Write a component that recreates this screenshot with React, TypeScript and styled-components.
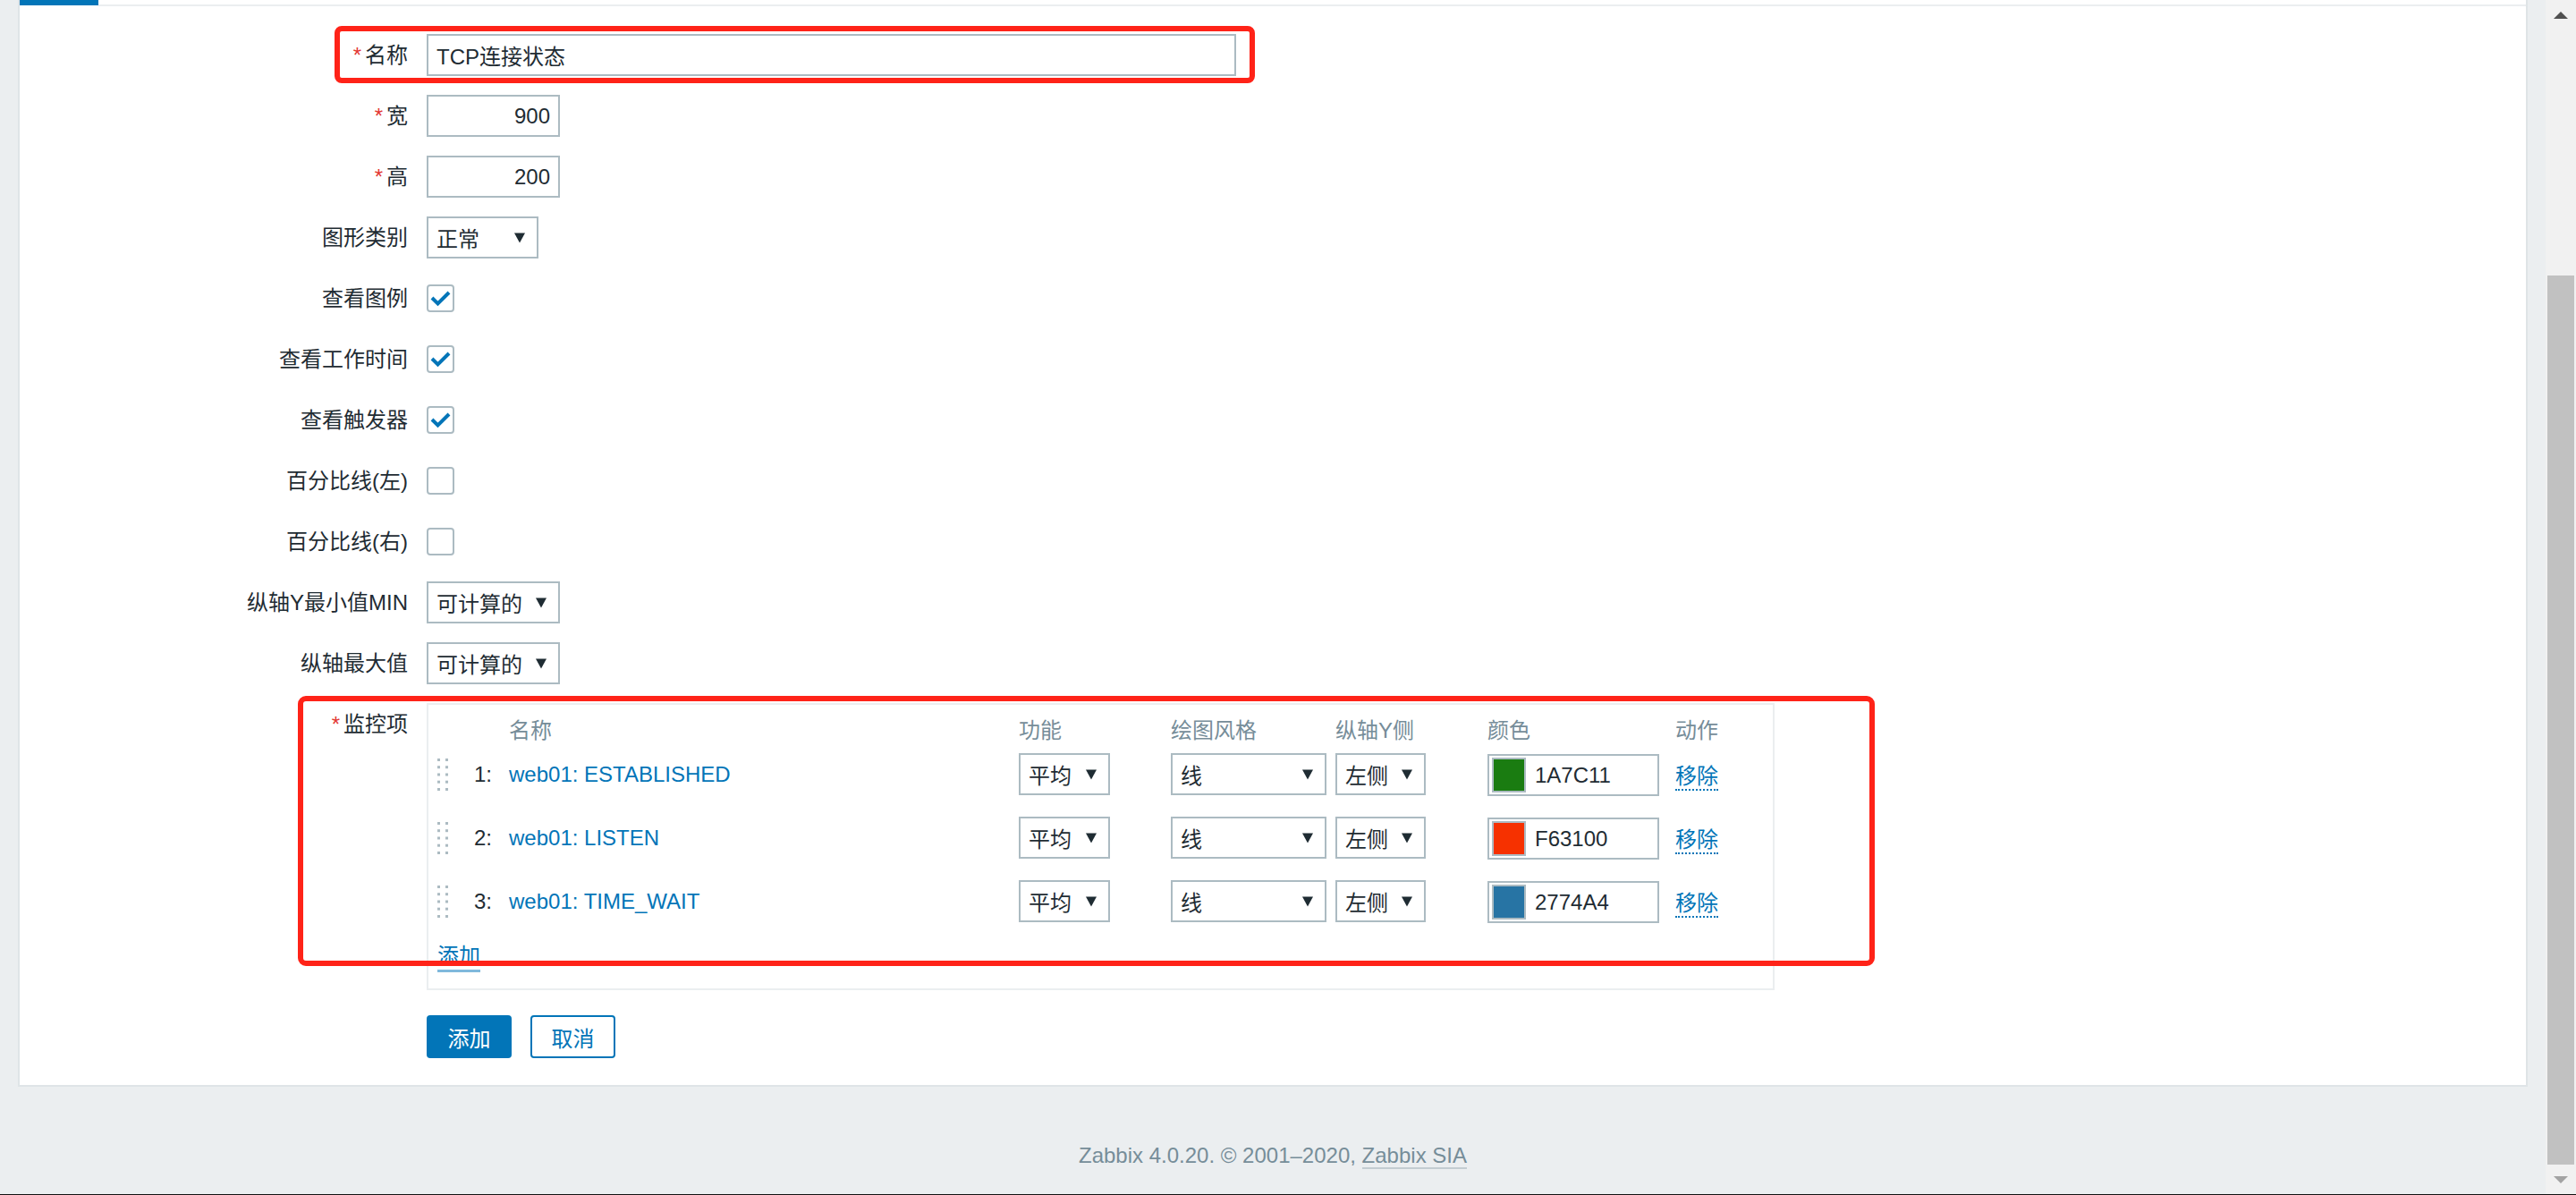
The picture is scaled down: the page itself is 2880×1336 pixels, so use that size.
import React from 'react';
import styled, { createGlobalStyle } from 'styled-components';

const FONT = `"Liberation Sans", Arial, "Noto Sans CJK SC", sans-serif`;

const GlobalStyle = createGlobalStyle`
  html, body { margin: 0; padding: 0; }
  body {
    font-family: ${FONT};
    font-size: 24px;
    color: #1f2c33;
    background: #ebeef0;
  }
  #root { width: 2880px; height: 1336px; overflow: hidden; }
  * { box-sizing: border-box; }
`;

const Page = styled.div`
  display: flex;
  flex-direction: column;
  width: 2880px;
  height: 1336px;
  background: #ebeef0;
`;

const Viewport = styled.div`
  display: flex;
  flex: 1;
  min-height: 0;
`;

const Main = styled.div`
  flex: 1;
  display: flex;
  flex-direction: column;
  min-width: 0;
`;

const Panel = styled.div`
  margin: 0 20px;
  background: #ffffff;
  border: 2px solid #dfe4e7;
  border-top: none;
  padding-bottom: 30px;
`;

const TabStrip = styled.div`
  display: flex;
  align-items: flex-start;
  height: 7px;
`;

const ActiveTab = styled.div`
  width: 88px;
  height: 6px;
  background: #0275b8;
`;

const TabRest = styled.div`
  flex: 1;
  height: 7px;
  border-bottom: 2px solid #ebeef0;
`;

const Form = styled.div`
  display: flex;
  flex-direction: column;
  gap: 21px;
  padding-top: 31px;
`;

const FormRow = styled.div<{ $top?: boolean }>`
  position: relative;
  display: grid;
  grid-template-columns: 434px 1fr;
  column-gap: 21px;
  align-items: ${(p) => (p.$top ? 'start' : 'center')};
  min-height: 47px;
`;

const Label = styled.div`
  text-align: right;
  line-height: 47px;
  white-space: nowrap;
  color: #1f2c33;
`;

const Star = styled.span`
  color: #e33734;
  margin-right: 4px;
`;

const TextInput = styled.input<{ $w: number; $right?: boolean }>`
  width: ${(p) => p.$w}px;
  height: 47px;
  border: 2px solid #acbbc2;
  padding: 0 9px;
  font: inherit;
  font-size: 24px;
  color: #1f2c33;
  background: #fff;
  outline: none;
  text-align: ${(p) => (p.$right ? 'right' : 'left')};
`;

const CheckBox = styled.div`
  width: 31px;
  height: 31px;
  border: 2px solid #acbbc2;
  border-radius: 4px;
  background: #fff;
  display: flex;
  align-items: center;
  justify-content: center;
`;

const SelectBox = styled.div<{ $w: number }>`
  width: ${(p) => p.$w}px;
  height: 47px;
  border: 2px solid #acbbc2;
  background: #fff;
  display: flex;
  align-items: center;
  justify-content: space-between;
  padding: 0 13px 0 9px;
  color: #1f2c33;
  white-space: nowrap;
`;

const ItemsBox = styled.div`
  width: 1507px;
  border: 2px solid #ebeef0;
  padding: 6px 10px 18px 10px;
  display: flex;
  flex-direction: column;
`;

const GridCols = `41px 39px 570px 170px 184px 170px 210px 1fr`;

const HeaderRow = styled.div`
  display: grid;
  grid-template-columns: ${GridCols};
  height: 40px;
  align-items: center;
  color: #768d99;
`;

const ItemsList = styled.div`
  display: flex;
  flex-direction: column;
  gap: 24px;
  margin-top: 7px;
`;

const ItemRow = styled.div`
  display: grid;
  grid-template-columns: ${GridCols};
  height: 47px;
  align-items: center;
`;

const RowNum = styled.div`
  color: #1f2c33;
`;

const ItemLink = styled.span`
  color: #0275b8;
  white-space: nowrap;
`;

const ColorInput = styled.div`
  align-self: start;
  margin-top: 2px;
  width: 192px;
  height: 47px;
  border: 2px solid #acbbc2;
  display: flex;
  align-items: center;
  gap: 10px;
  padding-left: 3px;
  color: #1f2c33;
`;

const Swatch = styled.div<{ $c: string }>`
  width: 38px;
  height: 39px;
  border: 2px solid #acbbc2;
  background: ${(p) => p.$c};
`;

const RemoveLink = styled.span`
  justify-self: start;
  margin-top: 6px;
  color: #0275b8;
  line-height: 28px;
  border-bottom: 2px dotted #0275b8;
`;

const AddLink = styled.span`
  align-self: flex-start;
  margin-top: 24px;
  color: #0275b8;
  line-height: 30px;
  border-bottom: 3px solid #80b9dc;
`;

const ButtonRow = styled.div`
  display: flex;
  gap: 21px;
  margin-top: 7px;
  padding-left: 455px;
`;

const PrimaryButton = styled.button`
  width: 95px;
  height: 48px;
  border: none;
  border-radius: 4px;
  background: #0275b8;
  color: #ffffff;
  font: inherit;
  font-size: 24px;
  padding: 0;
`;

const SecondaryButton = styled.button`
  width: 95px;
  height: 48px;
  border: 2px solid #0275b8;
  border-radius: 4px;
  background: #ffffff;
  color: #0275b8;
  font: inherit;
  font-size: 24px;
  padding: 0;
`;

const NameHighlight = styled.div`
  position: absolute;
  left: 352px;
  top: -9px;
  width: 1029px;
  height: 64px;
  border: 6px solid #ff2318;
  border-radius: 8px;
  pointer-events: none;
`;

const ItemsHighlight = styled.div`
  position: absolute;
  left: 311px;
  top: -8px;
  width: 1763px;
  height: 302px;
  border: 6px solid #ff2318;
  border-radius: 9px;
  pointer-events: none;
`;

const Footer = styled.div`
  flex: 1;
  padding-top: 63px;
  text-align: center;
  color: #768d99;
  line-height: 28px;
`;

const FooterLink = styled.span`
  border-bottom: 2px solid #c3ccd1;
`;

const BottomLine = styled.div`
  height: 1px;
  background: #111;
`;

const ScrollTrack = styled.div`
  width: 34px;
  background: #f1f1f1;
  display: flex;
  flex-direction: column;
`;

const ScrollArrow = styled.div<{ $h: number }>`
  height: ${(p) => p.$h}px;
  display: flex;
  align-items: center;
  justify-content: center;
`;

const ScrollThumb = styled.div`
  flex: 1;
  margin: 274px 2px 0;
  background: #c1c1c1;
`;

const Arrow = () => (
  <svg width="12" height="12" viewBox="0 0 12 12">
    <polygon points="0,0.5 12,0.5 6,11.5" fill="#1f2c33" />
  </svg>
);

const Check = () => (
  <svg width="27" height="27" viewBox="0 0 27 27">
    <polyline points="4,13 10.5,19.5 23,7" fill="none" stroke="#0275b8" strokeWidth="4" />
  </svg>
);

const DragHandle = () => (
  <svg width="12" height="36" viewBox="0 0 12 36">
    {[0, 8.2, 16.5, 24.7, 33].map((y) =>
      [0, 9].map((x) => <rect key={`${x}-${y}`} x={x} y={y} width="3" height="3" fill="#acbbc2" />)
    )}
  </svg>
);

const Select = ({ w, text }: { w: number; text: string }) => (
  <SelectBox $w={w}>
    <span>{text}</span>
    <Arrow />
  </SelectBox>
);

const items = [
  { n: 1, name: 'web01: ESTABLISHED', color: '#1A7C11', hex: '1A7C11' },
  { n: 2, name: 'web01: LISTEN', color: '#F63100', hex: 'F63100' },
  { n: 3, name: 'web01: TIME_WAIT', color: '#2774A4', hex: '2774A4' },
];

const checkRows = [
  { label: '查看图例', on: true },
  { label: '查看工作时间', on: true },
  { label: '查看触发器', on: true },
  { label: '百分比线(左)', on: false },
  { label: '百分比线(右)', on: false },
];

export default function App() {
  return (
    <>
      <GlobalStyle />
      <Page>
        <Viewport>
          <Main>
            <Panel>
              <TabStrip>
                <ActiveTab />
                <TabRest />
              </TabStrip>
              <Form>
                <FormRow>
                  <Label><Star>*</Star>名称</Label>
                  <TextInput $w={905} readOnly value="TCP连接状态" />
                  <NameHighlight />
                </FormRow>
                <FormRow>
                  <Label><Star>*</Star>宽</Label>
                  <TextInput $w={149} $right readOnly value="900" />
                </FormRow>
                <FormRow>
                  <Label><Star>*</Star>高</Label>
                  <TextInput $w={149} $right readOnly value="200" />
                </FormRow>
                <FormRow>
                  <Label>图形类别</Label>
                  <Select w={125} text="正常" />
                </FormRow>
                {checkRows.map((r) => (
                  <FormRow key={r.label}>
                    <Label>{r.label}</Label>
                    <CheckBox>{r.on && <Check />}</CheckBox>
                  </FormRow>
                ))}
                <FormRow>
                  <Label>纵轴Y最小值MIN</Label>
                  <Select w={149} text="可计算的" />
                </FormRow>
                <FormRow>
                  <Label>纵轴最大值</Label>
                  <Select w={149} text="可计算的" />
                </FormRow>
                <FormRow $top>
                  <Label><Star>*</Star>监控项</Label>
                  <ItemsBox>
                    <HeaderRow>
                      <span />
                      <span />
                      <span>名称</span>
                      <span>功能</span>
                      <span>绘图风格</span>
                      <span>纵轴Y侧</span>
                      <span>颜色</span>
                      <span>动作</span>
                    </HeaderRow>
                    <ItemsList>
                      {items.map((it) => (
                        <ItemRow key={it.n}>
                          <DragHandle />
                          <RowNum>{it.n}:</RowNum>
                          <ItemLink>{it.name}</ItemLink>
                          <Select w={102} text="平均" />
                          <Select w={174} text="线" />
                          <Select w={101} text="左侧" />
                          <ColorInput>
                            <Swatch $c={it.color} />
                            <span>{it.hex}</span>
                          </ColorInput>
                          <RemoveLink>移除</RemoveLink>
                        </ItemRow>
                      ))}
                    </ItemsList>
                    <AddLink>添加</AddLink>
                  </ItemsBox>
                  <ItemsHighlight />
                </FormRow>
                <ButtonRow>
                  <PrimaryButton>添加</PrimaryButton>
                  <SecondaryButton>取消</SecondaryButton>
                </ButtonRow>
              </Form>
            </Panel>
            <Footer>
              Zabbix 4.0.20. © 2001–2020, <FooterLink>Zabbix SIA</FooterLink>
            </Footer>
          </Main>
          <ScrollTrack>
            <ScrollArrow $h={34}>
              <svg width="16" height="8" viewBox="0 0 16 8">
                <polygon points="0,8 16,8 8,0" fill="#505050" />
              </svg>
            </ScrollArrow>
            <ScrollThumb />
            <ScrollArrow $h={33}>
              <svg width="16" height="8" viewBox="0 0 16 8">
                <polygon points="0,0 16,0 8,8" fill="#a3a3a3" />
              </svg>
            </ScrollArrow>
          </ScrollTrack>
        </Viewport>
        <BottomLine />
      </Page>
    </>
  );
}
